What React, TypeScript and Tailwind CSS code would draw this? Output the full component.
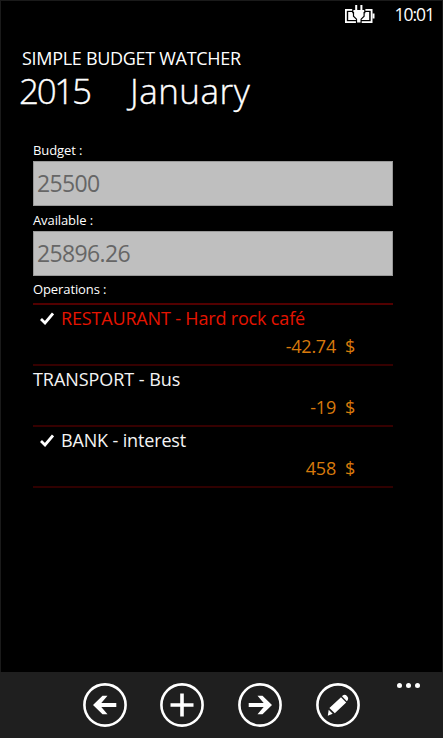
import React from "react";

interface Operation {
  label: string;
  amount: string;
  checked: boolean;
  labelClass: string;
  lineClass: string;
}

const operations: Operation[] = [
  {
    label: "RESTAURANT - Hard rock café",
    amount: "-42.74",
    checked: true,
    labelClass: "text-[#e51400] tracking-[-0.17px]",
    lineClass: "border-[#360000]",
  },
  {
    label: "TRANSPORT - Bus",
    amount: "-19",
    checked: false,
    labelClass: "text-[#f4f4f4] tracking-[-0.05px]",
    lineClass: "border-[#360000]",
  },
  {
    label: "BANK - interest",
    amount: "458",
    checked: true,
    labelClass: "text-[#f4f4f4] tracking-[-0.15px]",
    lineClass: "border-[#300000]",
  },
];

const StatusBar: React.FC = () => (
  <div className="flex h-[28px] items-start justify-end pr-[8px]">
    <svg className="mt-[3px] mr-[18px] h-[20px] w-[31px]" viewBox="0 0 31 20">
      <rect x="0.9" y="5.900" width="25.700" height="12.200" fill="none" stroke="#fff" strokeWidth="1.800" />
      <rect x="27.500" y="9.500" width="2" height="5" fill="#fff" />
      <path d="M3.200 8h21v8h-21z" fill="#fff" />
      <path
        d="M10.200 1h2V6h3.200V1h2V6h1.800v2h-0.700v4l-3 3V18.500h-3.400V15l-3-3V8H8.400V6h1.800z"
        fill="#fff"
        stroke="#000"
        strokeWidth="2.400"
        paintOrder="stroke"
      />
    </svg>
    <span className="mt-[2px] text-[17.5px] leading-[22px] tracking-[-1px]">10:01</span>
  </div>
);

const Field: React.FC<{ label: string; value: string }> = (props) => (
  <div className="h-[70px]">
    <div className="h-[20px] text-[13px] leading-[18px] tracking-[-0.1px]">{props.label}</div>
    <div className="flex h-[45px] items-center border border-[#999] bg-[#bfbfbf] pl-[3px] text-[23px] tracking-[-0.65px] text-[#666]">
      {props.value}
    </div>
  </div>
);

const OperationRow: React.FC<{ operation: Operation }> = ({ operation }) => (
  <li className={`h-[61px] border-b-2 ${operation.lineClass}`}>
    <div className="flex h-[26px] items-center">
      {operation.checked && (
        <svg className="mr-[7px] ml-[7px] h-[13px] w-[14px]" viewBox="0 0 14 13">
          <path d="M1 7l4 4L13 1.500" fill="none" stroke="#fff" strokeWidth="2.800" />
        </svg>
      )}
      <span className={`text-[18px] leading-[26px] whitespace-pre ${operation.labelClass}`}>
        {operation.label}
      </span>
    </div>
    <div className="flex h-[31px] items-center justify-end gap-[9px] pr-[38px] text-[18px] tracking-[-0.25px] text-[#d87a0c]">
      <span>{operation.amount}</span>
      <span>$</span>
    </div>
  </li>
);

const AppBarButton: React.FC<{ label: string; children: React.ReactNode }> = (props) => (
  <button type="button" aria-label={props.label} className="h-[44px] w-[44px]">
    <svg className="h-[44px] w-[44px]" viewBox="0 0 44 44">
      <circle cx="22" cy="22" r="20.600" fill="none" stroke="#fff" strokeWidth="2.600" />
      {props.children}
    </svg>
  </button>
);

export default function App() {
  return (
    <div className="flex h-[738px] w-[443px] flex-col overflow-hidden bg-black font-['Open_Sans',sans-serif] text-white">
      <div className="flex flex-1 flex-col border border-b-0 border-[#1a1a1a]">
        <StatusBar />

        <header className="mt-[17px] pl-[21px]">
          <h1 className="text-[18px] leading-[24px] tracking-[-0.3px]">SIMPLE BUDGET WATCHER</h1>
          <div className="flex h-[41px] text-[35px] leading-[41px] font-light [-webkit-text-stroke:0.35px_white]">
            <span className="-ml-[3px] w-[111px] tracking-[-2.3px]">2015</span>
            <span className="tracking-[0.5px]">January</span>
          </div>
        </header>

        <main className="mt-[30px] ml-[32px] w-[360px]">
          <Field label="Budget :" value="25500" />
          <Field label="Available :" value="25896.26" />
          <div className="h-[22px] text-[13px] leading-[17px] tracking-[-0.1px]">Operations :</div>
          <ul className="border-t-2 border-[#520000]">
            {operations.map((operation) => (
              <OperationRow key={operation.label} operation={operation} />
            ))}
          </ul>
        </main>
      </div>

      <footer className="flex h-[66px] items-start bg-[#1f1f1f] pl-[82.5px]">
        <div className="mt-[11px] flex gap-[33.8px]">
          <AppBarButton label="Previous month">
            <path d="M10 22l9.500-9.200h5L18.300 19.900h15v4.200h-15l6.200 7.100h-5z" fill="#fff" />
          </AppBarButton>
          <AppBarButton label="Add">
            <path d="M20.200 10.500h3.600v9.700h9.700v3.600h-9.700v9.700h-3.600v-9.700h-9.700v-3.600h9.700z" fill="#fff" />
          </AppBarButton>
          <AppBarButton label="Next month">
            <path d="M34 22l-9.500-9.200h-5L25.700 19.900h-15v4.200h15l-6.200 7.100h5z" fill="#fff" />
          </AppBarButton>
          <AppBarButton label="Edit">
            <path d="M25 14.200l5.200 5.200L18.800 30.200L13.400 25z M12.700 26.800l4 4-4.900 1.900z" fill="#fff" />
            <path d="M26 13.300l1-1q2-1.300 4 0.700q2 2 0.800 4l-1 1.200z" fill="#fff" />
          </AppBarButton>
        </div>
        <button type="button" aria-label="More" className="mt-[11px] ml-[37px] flex gap-[4px]">
          <span className="h-[5px] w-[5px] rounded-full bg-white" />
          <span className="h-[5px] w-[5px] rounded-full bg-white" />
          <span className="h-[5px] w-[5px] rounded-full bg-white" />
        </button>
      </footer>
    </div>
  );
}
